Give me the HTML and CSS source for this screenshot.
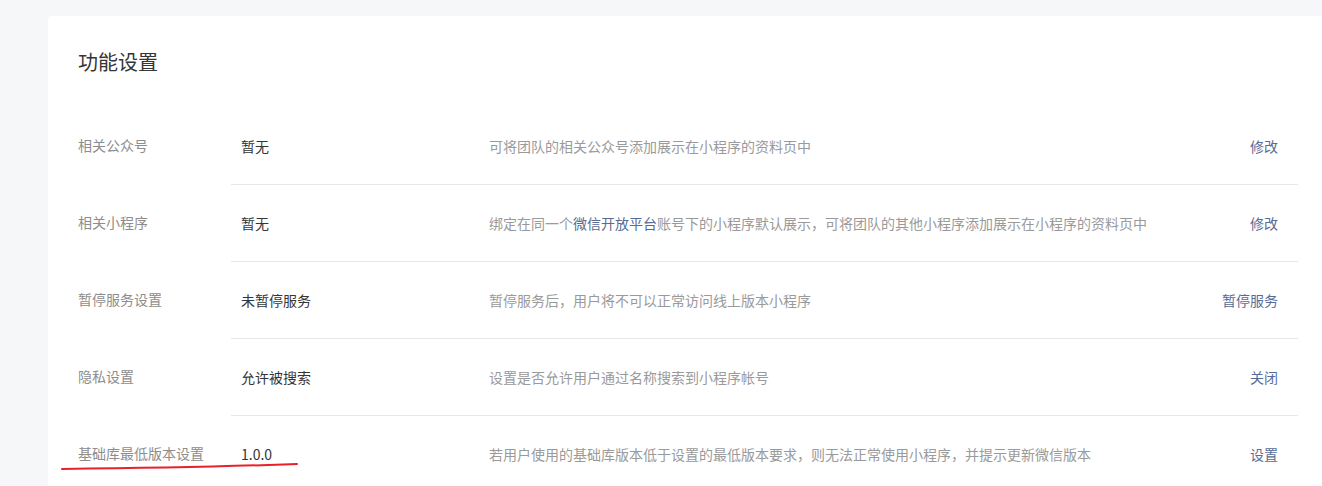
FILE: index.html
```html
<!DOCTYPE html>
<html lang="zh-CN">
<head>
<meta charset="utf-8">
<title>功能设置</title>
<link rel="stylesheet" href="styles.css">
</head>
<body>
<div class="card">
  <h2 class="title">功能设置</h2>
  <div class="rows">
    <div class="row">
      <div class="label">相关公众号</div>
      <div class="cell">
        <div class="value">暂无</div>
        <div class="desc">可将团队的相关公众号添加展示在小程序的资料页中</div>
        <a class="action">修改</a>
      </div>
    </div>
    <div class="row">
      <div class="label">相关小程序</div>
      <div class="cell">
        <div class="value">暂无</div>
        <div class="desc">绑定在同一个<a class="link">微信开放平台</a>账号下的小程序默认展示，可将团队的其他小程序添加展示在小程序的资料页中</div>
        <a class="action">修改</a>
      </div>
    </div>
    <div class="row">
      <div class="label">暂停服务设置</div>
      <div class="cell">
        <div class="value">未暂停服务</div>
        <div class="desc">暂停服务后，用户将不可以正常访问线上版本小程序</div>
        <a class="action">暂停服务</a>
      </div>
    </div>
    <div class="row">
      <div class="label">隐私设置</div>
      <div class="cell">
        <div class="value">允许被搜索</div>
        <div class="desc">设置是否允许用户通过名称搜索到小程序帐号</div>
        <a class="action">关闭</a>
      </div>
    </div>
    <div class="row">
      <div class="label">基础库最低版本设置</div>
      <div class="cell">
        <div class="value">1.0.0</div>
        <div class="desc">若用户使用的基础库版本低于设置的最低版本要求，则无法正常使用小程序，并提示更新微信版本</div>
        <a class="action">设置</a>
      </div>
    </div>
  </div>
</div>
<svg class="mark" width="1322" height="486" viewBox="0 0 1322 486">
  <path d="M62 469 Q 200 467.5 297 464" fill="none" stroke="#e8202a" stroke-width="2" stroke-linecap="round"/>
</svg>
</body>
</html>
```

FILE: styles.css
```css
html, body {
  margin: 0;
  padding: 0;
}
body {
  background: #f6f7f9;
  padding: 16px 0 0 48px;
  overflow: hidden;
  height: 486px;
  box-sizing: border-box;
  font-family: "Noto Sans CJK SC", "Noto Sans", sans-serif;
  font-size: 14px;
  color: #353535;
  position: relative;
}
.card {
  background: #fff;
  border-radius: 4px 4px 0 0;
  width: 1220px;
  height: 470px;
  overflow: hidden;
  box-sizing: content-box;
  padding: 32px 30px 0 30px;
}
.title {
  margin: 0;
  font-size: 20px;
  font-weight: normal;
  line-height: 28px;
  color: #353535;
}
.rows {
  margin-top: 32px;
}
.row {
  display: flex;
  height: 77px;
}
.label {
  width: 153px;
  flex: none;
  display: flex;
  align-items: center;
  color: #8d8d8d;
  padding-bottom: 3px;
}
.cell {
  flex: 1;
  display: flex;
  align-items: center;
  border-bottom: 1px solid #e7e7eb;
  padding-right: 20px;
  padding-bottom: 1px;
}
.value {
  width: 248px;
  padding-left: 10px;
  flex: none;
  color: #353535;
}
.desc {
  flex: 1;
  color: #9a9a9a;
}
.link {
  color: #576b95;
}
.action {
  color: #576b95;
  cursor: pointer;
}
.mark {
  position: absolute;
  left: 0;
  top: 0;
  pointer-events: none;
}
```
